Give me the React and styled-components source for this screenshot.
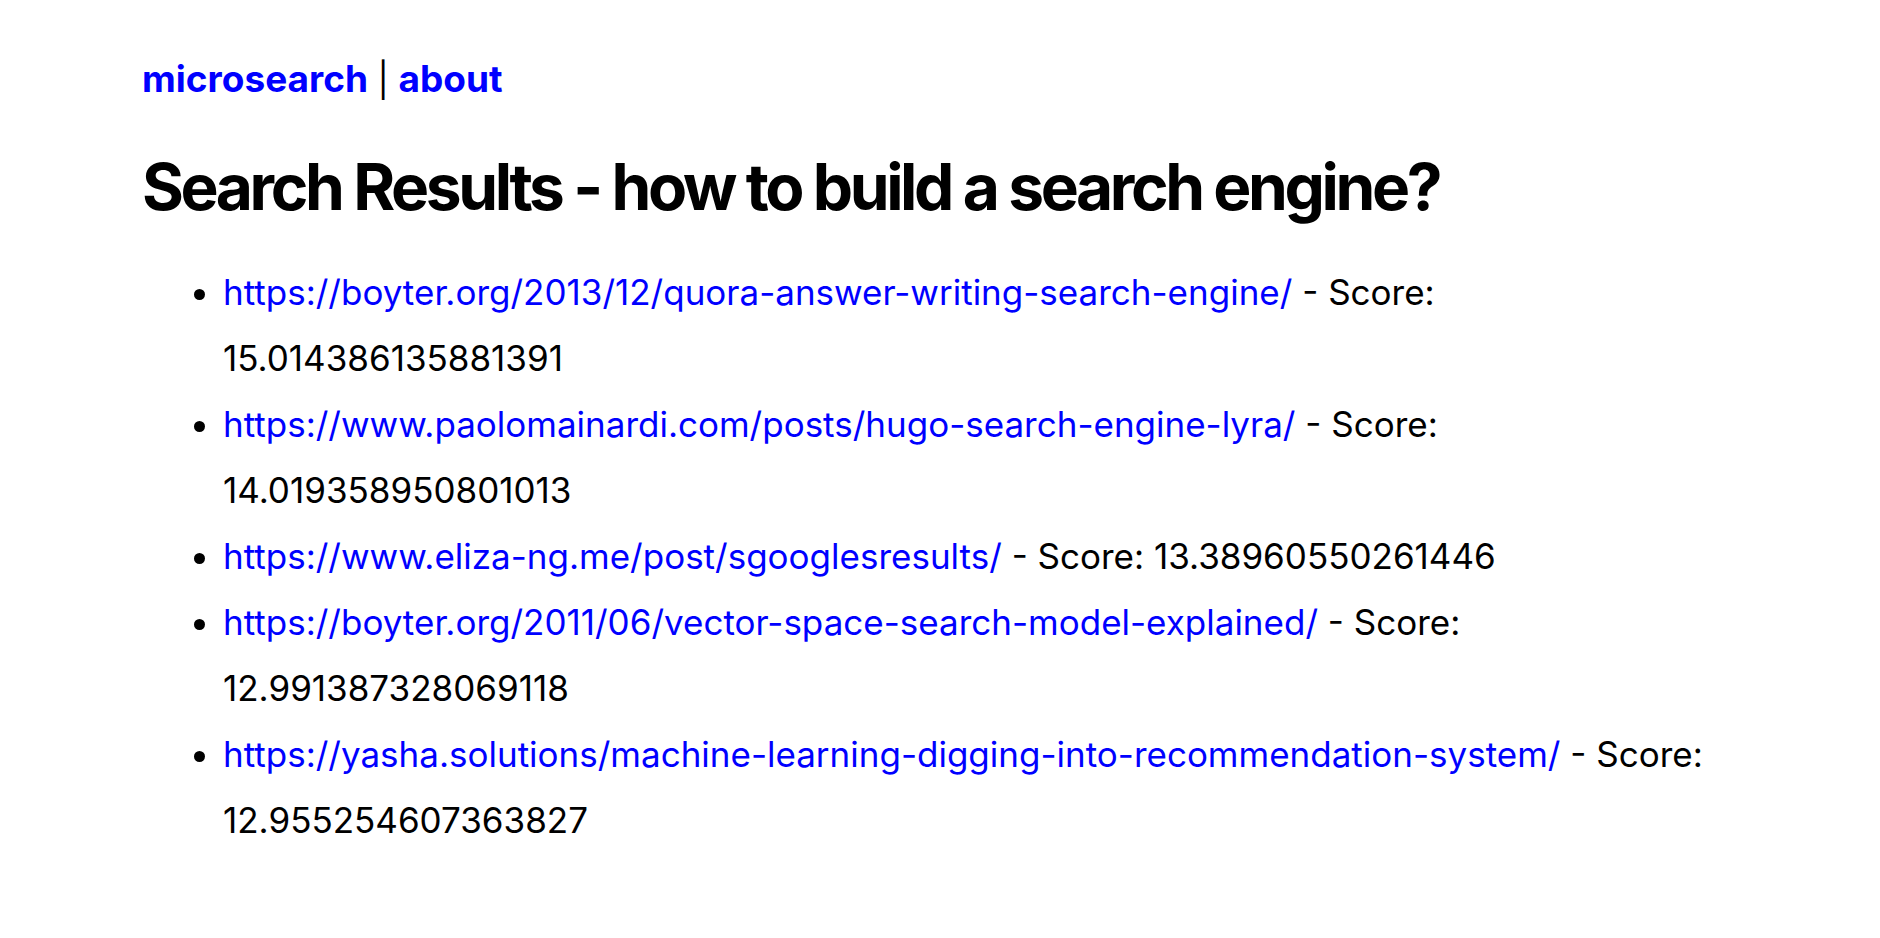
import React from 'react';
import styled, { createGlobalStyle } from 'styled-components';

const GlobalStyle = createGlobalStyle`
  body {
    margin: 0;
    background: #fff;
    color: #000;
    font-family: Inter, "Noto Sans", sans-serif;
  }
`;

const Page = styled.div`
  padding: 46px 130px 40px 142px;
  font-size: 35px;
  line-height: 66px;
`;

const Nav = styled.nav`
  font-size: 34px;
`;

const Link = styled.a`
  color: #0000ff;
  text-decoration: none;
  font-weight: ${p => (p.$bold ? 700 : 400)};
  font-size: ${p => (p.$bold ? '37px' : 'inherit')};
`;

const Title = styled.h1`
  margin: 34px 0 32px;
  font-size: 64px;
  line-height: 80px;
  font-weight: 700;
  letter-spacing: -3.4px;
`;

const Results = styled.ul`
  margin: 0;
  padding-left: 81px;
`;

const results = [
  { url: 'https://boyter.org/2013/12/quora-answer-writing-search-engine/', score: '15.014386135881391' },
  { url: 'https://www.paolomainardi.com/posts/hugo-search-engine-lyra/', score: '14.019358950801013' },
  { url: 'https://www.eliza-ng.me/post/sgooglesresults/', score: '13.38960550261446' },
  { url: 'https://boyter.org/2011/06/vector-space-search-model-explained/', score: '12.991387328069118' },
  { url: 'https://yasha.solutions/machine-learning-digging-into-recommendation-system/', score: '12.955254607363827' },
];

export default function App() {
  return (
    <>
      <GlobalStyle />
      <Page>
        <Nav>
          <Link $bold href="#">microsearch</Link> | <Link $bold href="#">about</Link>
        </Nav>
        <Title>Search Results - how to build a search engine?</Title>
        <Results>
          {results.map(r => (
            <li key={r.url}>
              <Link href={r.url}>{r.url}</Link> - Score: {r.score}
            </li>
          ))}
        </Results>
      </Page>
    </>
  );
}
